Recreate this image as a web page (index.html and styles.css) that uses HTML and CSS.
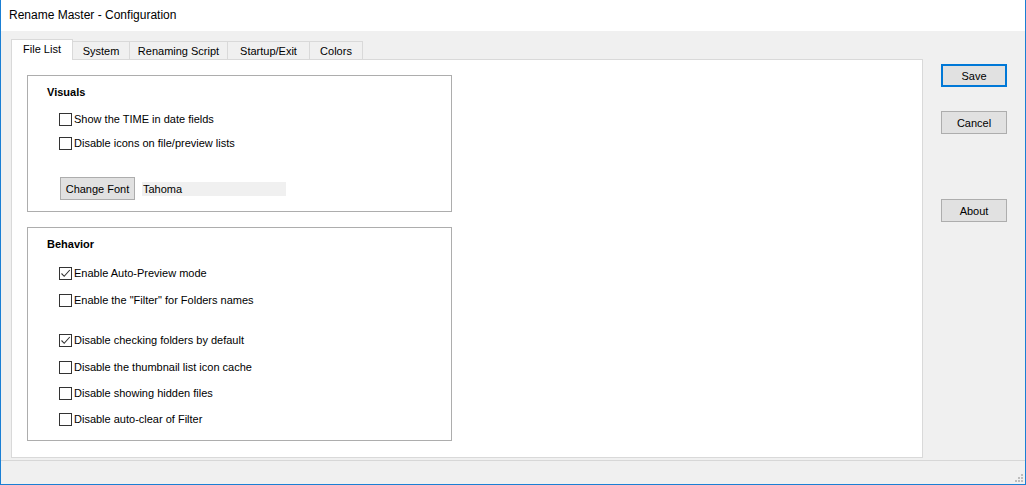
FILE: index.html
```html
<!DOCTYPE html>
<html>
<head>
<meta charset="utf-8">
<title>Rename Master - Configuration</title>
<link rel="stylesheet" href="styles.css">
</head>
<body>
<div class="window">
  <div class="titlebar">Rename Master - Configuration</div>
  <div class="client">
    <div class="main">
      <div class="tabstrip">
        <div class="tab tab-active tab-filelist">File List</div>
        <div class="tab tab-system">System</div>
        <div class="tab tab-script">Renaming Script</div>
        <div class="tab tab-startup">Startup/Exit</div>
        <div class="tab tab-colors">Colors</div>
      </div>
      <div class="panel">
        <div class="group group-visuals">
          <div class="group-title">Visuals</div>
          <label class="check row-v1"><span class="box"></span>Show the TIME in date fields</label>
          <label class="check row-v2"><span class="box"></span>Disable icons on file/preview lists</label>
          <div class="font-row">
            <button class="btn btn-font">Change Font</button>
            <div class="font-field">Tahoma</div>
          </div>
        </div>
        <div class="group group-behavior">
          <div class="group-title">Behavior</div>
          <label class="check row-b1"><span class="box checked"><svg viewBox="0 0 11 11" width="11" height="11"><path d="M1.5 5.5 L4.2 8.3 L9.8 2" fill="none" stroke="#333" stroke-width="1.1"/></svg></span>Enable Auto-Preview mode</label>
          <label class="check row-b2"><span class="box"></span>Enable the "Filter" for Folders names</label>
          <label class="check row-b3"><span class="box checked"><svg viewBox="0 0 11 11" width="11" height="11"><path d="M1.5 5.5 L4.2 8.3 L9.8 2" fill="none" stroke="#333" stroke-width="1.1"/></svg></span>Disable checking folders by default</label>
          <label class="check row-b4"><span class="box"></span>Disable the thumbnail list icon cache</label>
          <label class="check row-b5"><span class="box"></span>Disable showing hidden files</label>
          <label class="check row-b6"><span class="box"></span>Disable auto-clear of Filter</label>
        </div>
      </div>
    </div>
    <div class="side">
      <button class="btn btn-side btn-default">Save</button>
      <button class="btn btn-side btn-cancel">Cancel</button>
      <button class="btn btn-side btn-about">About</button>
    </div>
  </div>
  <div class="statusbar">
    <svg class="grip" width="10" height="10" viewBox="0 0 10 10">
      <rect x="7" y="1" width="2" height="2" fill="#bdbdbd"/>
      <rect x="4" y="4" width="2" height="2" fill="#bdbdbd"/>
      <rect x="7" y="4" width="2" height="2" fill="#bdbdbd"/>
      <rect x="1" y="7" width="2" height="2" fill="#bdbdbd"/>
      <rect x="4" y="7" width="2" height="2" fill="#bdbdbd"/>
      <rect x="7" y="7" width="2" height="2" fill="#bdbdbd"/>
    </svg>
  </div>
</div>
</body>
</html>
```

FILE: styles.css
```css
html, body {
  margin: 0;
  padding: 0;
  background: #f0f0f0;
}

.window {
  width: 1026px;
  height: 485px;
  box-sizing: border-box;
  border: 1px solid #1a7fd4;
  border-top: none;
  display: flex;
  flex-direction: column;
  background: #f0f0f0;
  font-family: "Liberation Sans", Arial, sans-serif;
  font-size: 11px;
  color: #000;
  overflow: hidden;
}

.titlebar {
  height: 31px;
  flex: none;
  background: #fff;
  font-size: 12px;
  line-height: 31px;
  padding-left: 8px;
  color: #000;
}

.client {
  flex: 1;
  display: flex;
  padding: 8px 18px 0 10px;
  min-height: 0;
}

.main {
  width: 912px;
  display: flex;
  flex-direction: column;
}

.tabstrip {
  display: flex;
  align-items: flex-end;
  height: 20px;
  flex: none;
  position: relative;
  z-index: 1;
}

.tab {
  box-sizing: border-box;
  height: 18px;
  border: 1px solid #d9d9d9;
  border-bottom: none;
  border-left: none;
  background: #f0f0f0;
  text-align: center;
  line-height: 18px;
}

.tab-active {
  height: 21px;
  margin-bottom: -1px;
  background: #fff;
  border-left: 1px solid #d9d9d9;
  line-height: 19px;
}

.tab-filelist { width: 62px; }
.tab-system { width: 57px; }
.tab-script { width: 98px; }
.tab-startup { width: 82px; }
.tab-colors { width: 53px; }

.panel {
  flex: 1;
  background: #fff;
  border: 1px solid #d9d9d9;
  padding: 15px 0 0 15px;
}

.group {
  box-sizing: border-box;
  width: 425px;
  border: 1px solid #adadad;
  padding-left: 31px;
}

.group-visuals {
  height: 137px;
  padding-top: 8px;
}

.group-behavior {
  height: 214px;
  margin-top: 15px;
  padding-top: 8px;
}

.group-title {
  font-weight: bold;
  height: 16px;
  line-height: 16px;
  margin-left: -12px;
}

.check {
  display: flex;
  align-items: center;
  height: 24px;
  white-space: nowrap;
}

.box {
  box-sizing: border-box;
  width: 13px;
  height: 13px;
  border: 1px solid #333;
  background: #fff;
  margin-right: 2px;
  flex: none;
  display: flex;
  align-items: center;
  justify-content: center;
}

.row-v1 { margin-top: 7px; }

.row-b1 { margin-top: 9px; }
.row-b2 { margin-top: 3px; }
.row-b3 { margin-top: 16px; }
.row-b4 { margin-top: 3px; }
.row-b5 { margin-top: 2px; }
.row-b6 { margin-top: 2px; }

.font-row {
  display: flex;
  align-items: center;
  margin-top: 22px;
  margin-left: 1px;
}

.btn {
  box-sizing: border-box;
  font-family: "Liberation Sans", Arial, sans-serif;
  font-size: 11px;
  color: #000;
  background: #e1e1e1;
  border: 1px solid #adadad;
  padding: 0;
  margin: 0;
}

.btn-font {
  width: 75px;
  height: 23px;
}

.font-field {
  width: 143px;
  height: 14px;
  line-height: 14px;
  background: #f0f0f0;
  margin-left: 7px;
  padding-left: 1px;
}

.side {
  display: flex;
  flex-direction: column;
  margin-left: 18px;
  padding-top: 25px;
}

.btn-side {
  width: 66px;
  height: 23px;
}

.btn-default {
  border: 2px solid #0078d7;
}

.btn-cancel { margin-top: 24px; }
.btn-about { margin-top: 65px; }

.statusbar {
  flex: none;
  height: 24px;
  box-sizing: border-box;
  margin-top: 2px;
  border-top: 1px solid #d7d7d7;
  display: flex;
  justify-content: flex-end;
  align-items: flex-end;
  padding: 0 1px 1px 0;
}

.grip {
  display: block;
}
```
